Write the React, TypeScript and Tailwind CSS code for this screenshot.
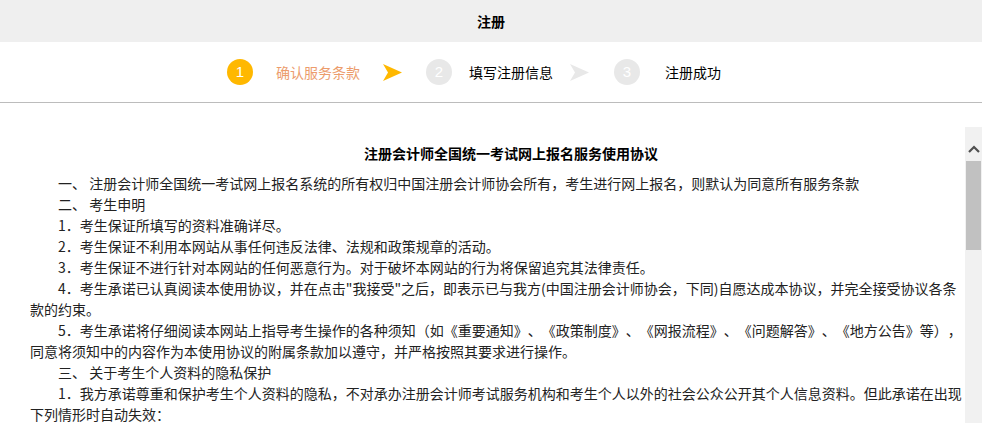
import React from "react";

const font = { fontFamily: '"Noto Sans CJK SC", "Noto Sans", sans-serif' };

function Arrow({ color }: { color: string }) {
  return (
    <svg width="19" height="17" viewBox="0 0 19 17" className="shrink-0">
      <path d="M0 0 L19 8.5 L0 17 L5 8.5 Z" fill={color} />
    </svg>
  );
}

function Circle({ n, active }: { n: number; active?: boolean }) {
  return (
    <div
      className={`w-[26px] h-[26px] shrink-0 rounded-full flex items-center justify-center text-white text-[15px] font-['Liberation_Sans',sans-serif] ${
        active ? "bg-[#ffb800]" : "bg-[#e8e8e8]"
      }`}
    >
      {n}
    </div>
  );
}

const paras: string[] = [
  "一、 注册会计师全国统一考试网上报名系统的所有权归中国注册会计师协会所有，考生进行网上报名，则默认为同意所有服务条款",
  "二、 考生申明",
  "1．考生保证所填写的资料准确详尽。",
  "2．考生保证不利用本网站从事任何违反法律、法规和政策规章的活动。",
  "3．考生保证不进行针对本网站的任何恶意行为。对于破坏本网站的行为将保留追究其法律责任。",
  '4．考生承诺已认真阅读本使用协议，并在点击"我接受"之后，即表示已与我方(中国注册会计师协会，下同)自愿达成本协议，并完全接受协议各条款的约束。',
  "5．考生承诺将仔细阅读本网站上指导考生操作的各种须知（如《重要通知》、《政策制度》、《网报流程》、《问题解答》、《地方公告》等），同意将须知中的内容作为本使用协议的附属条款加以遵守，并严格按照其要求进行操作。",
  "三、 关于考生个人资料的隐私保护",
  "1．我方承诺尊重和保护考生个人资料的隐私，不对承办注册会计师考试服务机构和考生个人以外的社会公众公开其个人信息资料。但此承诺在出现下列情形时自动失效：",
];

export default function App() {
  return (
    <div
      className="h-screen overflow-hidden bg-white text-[#222] flex flex-col [text-spacing-trim:space-all]"
      style={font}
    >
      <div className="h-[42px] shrink-0 bg-[#efefef] flex items-center justify-center text-[14px] font-bold text-black">
        注册
      </div>

      <div className="h-[61px] shrink-0 border-b border-[#bcbcbc] flex items-center text-[14px]">
        <div className="ml-[227px] flex items-center">
          <Circle n={1} active />
          <span className="ml-[23px] text-[#ec9c6c]">确认服务条款</span>
          <div className="ml-[23px]">
            <Arrow color="#ffb800" />
          </div>
          <div className="ml-[24px]">
            <Circle n={2} />
          </div>
          <span className="ml-[17px] text-black">填写注册信息</span>
          <div className="ml-[17px]">
            <Arrow color="#e8e8e8" />
          </div>
          <div className="ml-[25px]">
            <Circle n={3} />
          </div>
          <span className="ml-[25px] text-black">注册成功</span>
        </div>
      </div>

      <div className="mt-[24px] flex-1 flex min-h-0">
        <div className="flex-1 min-w-0 overflow-hidden pl-[30px] pt-[16px] text-[14px] leading-[21px]">
          <div className="pl-[27px] text-center font-bold text-black mb-[9px]">
            注册会计师全国统一考试网上报名服务使用协议
          </div>
          {paras.map((t, i) => (
            <p key={i} className="indent-[28px]">
              {t}
            </p>
          ))}
        </div>

        <div className="w-[17px] shrink-0 bg-[#f1f1f1] flex flex-col items-center">
          <div className="h-[34px] w-full flex items-center justify-center pt-[10px]">
            <svg width="12" height="8" viewBox="0 0 12 8">
              <path d="M1 7 L6 2 L11 7" fill="none" stroke="#505050" strokeWidth="2.2" />
            </svg>
          </div>
          <div className="w-[15px] h-[89px] bg-[#c1c1c1]" />
        </div>
      </div>
    </div>
  );
}
